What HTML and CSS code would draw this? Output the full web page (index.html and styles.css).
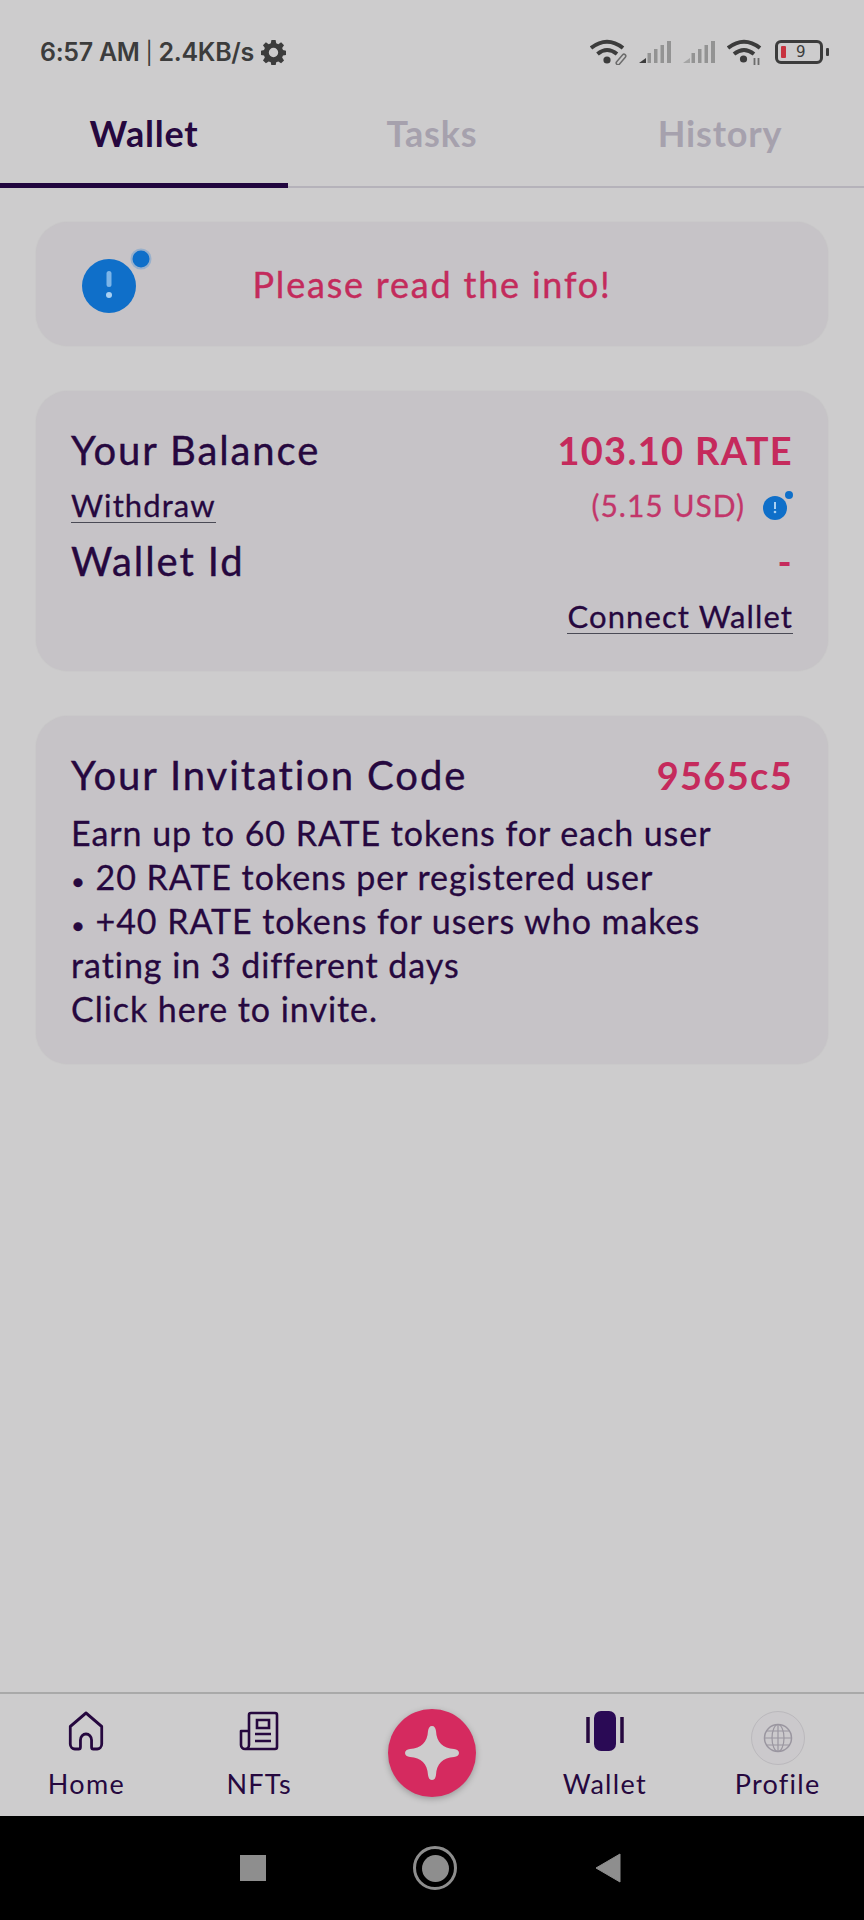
FILE: index.html
```html
<!DOCTYPE html>
<html lang="en">
<head>
  <meta charset="UTF-8">
  <meta name="viewport" content="width=device-width, initial-scale=1.0">
  <title>Wallet</title>
  <link rel="stylesheet" href="styles.css">
</head>
<body>
  <div class="status-bar">
    <div class="status-left">
      <span>6:57 AM <span class="sep">|</span> 2.4KB/s</span>
      <svg class="gear" viewBox="0 0 24 24"><path fill="#3c3c3c" fill-rule="evenodd" d="M10 0h4l.6 3.2 2 .8 2.7-1.8 2.8 2.8-1.8 2.7.8 2 3 .6v4l-3 .6-.8 2 1.8 2.7-2.8 2.8-2.7-1.8-2 .8-.6 3.2h-4l-.6-3.2-2-.8-2.7 1.8-2.8-2.8 1.8-2.7-.8-2-3-.6v-4l3-.6.8-2-1.8-2.7 2.8-2.8 2.7 1.8 2-.8zM12 7.500a4.500 4.500 0 1 0 0 9 4.500 4.500 0 0 0 0-9z"/></svg>
    </div>
    <div class="status-right">
      <svg class="wifi" viewBox="0 0 38 26">
        <path d="M1 9Q17-3.500 33 9M7.500 15Q17 7 27 15" fill="none" stroke="#3c3c3c" stroke-width="4"/>
        <circle cx="17" cy="21" r="3.600" fill="#3c3c3c"/>
        <path d="M28 24l6-7" fill="none" stroke="#6c6c6c" stroke-width="5" stroke-linecap="round"/>
        <path d="M28 24l6-7" fill="none" stroke="#cdcccd" stroke-width="2" stroke-linecap="round"/>
      </svg>
      <svg class="signal" viewBox="0 0 33 23">
        <path d="M0 22l7-5v5z" fill="#3c3c3c"/>
        <path d="M8.500 12h3.500v10H8.500zM15 8h3.500v14H15zM21.500 4H25v18h-3.500zM28 0h4v22h-4z" fill="#939393"/>
      </svg>
      <svg class="signal" viewBox="0 0 33 23">
        <path d="M0 22l7-5v5z" fill="#a5a5a5"/>
        <path d="M8.500 12h3.500v10H8.500zM15 8h3.500v14H15zM21.500 4H25v18h-3.500zM28 0h4v22h-4z" fill="#939393"/>
      </svg>
      <svg class="wifi wifi-two" viewBox="0 0 36 26">
        <path d="M1 9Q17-3.500 33 9M7 15Q17 7 27 15" fill="none" stroke="#3c3c3c" stroke-width="4"/>
        <circle cx="16.500" cy="20" r="3.600" fill="#3c3c3c"/>
        <path d="M27.500 19v7M31.500 19v7" stroke="#6c6c6c" stroke-width="1.800"/>
      </svg>
      <div class="battery">
        <div class="battery-body">
          <i class="battery-level"></i>
          <span class="battery-num">9</span>
        </div>
        <i class="battery-nub"></i>
      </div>
    </div>
  </div>

  <div class="tabs">
    <div class="tab active">Wallet</div>
    <div class="tab">Tasks</div>
    <div class="tab">History</div>
  </div>

  <div class="content">
    <div class="card info-card">
      <div class="info-icon big">
        <svg viewBox="0 0 72 72">
          <circle cx="27" cy="45" r="27" fill="#0f6fc9"/>
          <circle cx="59" cy="18" r="10.500" fill="#2f86d6" opacity="0.3"/>
          <circle cx="59" cy="18" r="8.500" fill="#0f6fc9"/>
          <rect x="24.500" y="30" width="5" height="16" rx="2.500" fill="#7db5e8"/>
          <circle cx="27" cy="54" r="3" fill="#a9d0f2"/>
        </svg>
      </div>
      <div class="info-text">Please read the info!</div>
    </div>

    <div class="card balance-card">
      <div class="row">
        <div class="label">Your Balance</div>
        <div class="value">103.10 RATE</div>
      </div>
      <div class="row">
        <a class="link">Withdraw</a>
        <div class="usd">
          (5.15 USD)
          <svg class="small-info" viewBox="0 0 32 32">
            <circle cx="13" cy="19" r="12" fill="#0f6fc9"/>
            <circle cx="27" cy="6" r="4" fill="#0f6fc9"/>
            <rect x="12" y="13" width="2" height="7" fill="#a9d0f2"/>
            <circle cx="13" cy="23" r="1.300" fill="#a9d0f2"/>
          </svg>
        </div>
      </div>
      <div class="row">
        <div class="label">Wallet Id</div>
        <div class="value">-</div>
      </div>
      <div class="row row-end">
        <a class="link">Connect Wallet</a>
      </div>
    </div>

    <div class="card invite-card">
      <div class="row invite-head">
        <div class="label">Your Invitation Code</div>
        <div class="value">9565c5</div>
      </div>
      <p class="invite-text">Earn up to 60 RATE tokens for each user<br>
      <span class="bullet">•</span> 20 RATE tokens per registered user<br>
      <span class="bullet">•</span> +40 RATE tokens for users who makes<br>
      rating in 3 different days<br>
      Click here to invite.</p>
    </div>
  </div>

  <div class="bottom-nav">
    <div class="nav-item">
      <svg class="nav-icon" viewBox="0 0 40 40">
        <path d="M3 15.500L20 2l17 13.500V33a5 5 0 0 1-5 5h-4a2 2 0 0 1-2-2v-7a6 6 0 0 0-12 0v7a2 2 0 0 1-2 2H8a5 5 0 0 1-5-5z" transform="translate(1.500 0) scale(.925 1)" fill="none" stroke="#26083f" stroke-width="3" stroke-linejoin="round"/>
      </svg>
      <span>Home</span>
    </div>
    <div class="nav-item">
      <svg class="nav-icon" viewBox="0 0 40 40">
        <path d="M10 20V4a2 2 0 0 1 2-2h24a2 2 0 0 1 2 2v32a2 2 0 0 1-2 2H6a4 4 0 0 1-4-4V20h8v14a4 4 0 0 1-4 4" fill="none" stroke="#26083f" stroke-width="2.600" stroke-linejoin="round"/>
        <path d="M18 9h12v8H18zM16 23h16M16 30h16" fill="none" stroke="#26083f" stroke-width="2.600"/>
      </svg>
      <span>NFTs</span>
    </div>
    <div class="nav-item nav-fab">
      <div class="fab">
        <svg viewBox="0 0 56 56"><path d="M28 1C30.500 1 31.500 3 32 6C32.500 17 39 23.500 50 24C53 24.500 55 25.500 55 28C55 30.500 53 31.500 50 32C39 32.500 32.500 39 32 50C31.500 53 30.500 55 28 55C25.500 55 24.500 53 24 50C23.500 39 17 32.500 6 32C3 31.500 1 30.500 1 28C1 25.500 3 24.500 6 24C17 23.500 23.500 17 24 6C24.500 3 25.500 1 28 1Z" fill="#cdcccd"/></svg>
      </div>
    </div>
    <div class="nav-item">
      <svg class="nav-icon" viewBox="0 0 40 40">
        <rect x="9" y="0" width="22" height="40" rx="7" fill="#2a0a55"/>
        <path d="M3 6v26M37 6v26" stroke="#26083f" stroke-width="3.500"/>
      </svg>
      <span>Wallet</span>
    </div>
    <div class="nav-item">
      <svg class="nav-icon profile-icon" viewBox="0 0 54 54">
        <circle cx="27" cy="27" r="26.500" fill="#cbc9cc" stroke="#bab8bc" stroke-width="1"/>
        <circle cx="27" cy="27" r="13.500" fill="none" stroke="#9a96a0" stroke-width="1.500"/>
        <ellipse cx="27" cy="27" rx="6" ry="13.500" fill="none" stroke="#9a96a0" stroke-width="1.200"/>
        <path d="M27 13.500v27M15 20h24M13.500 27h27M15 34h24" stroke="#9a96a0" stroke-width="1.200"/>
      </svg>
      <span>Profile</span>
    </div>
  </div>

  <div class="system-bar">
    <div class="sys-square"></div>
    <div class="sys-circle"><i></i></div>
    <svg class="sys-back" viewBox="0 0 26 30"><path d="M25 1v28L1 15z" fill="#8e8e8e" stroke="#8e8e8e" stroke-linejoin="round"/></svg>
  </div>
</body>
</html>
```

FILE: styles.css
```css
body {
  margin: 0;
  height: 1920px;
  display: flex;
  flex-direction: column;
  background: #cdcccd;
  font-family: "Lato", sans-serif;
  color: #26083f;
  overflow: hidden;
}

.status-bar {
  height: 92px;
  padding: 12px 35px 0 40px;
  box-sizing: border-box;
  display: flex;
  justify-content: space-between;
  align-items: center;
  color: #3c3c3c;
}

.status-left {
  display: flex;
  align-items: center;
  gap: 7px;
  font-family: "Inter", sans-serif;
  font-size: 25px;
  font-weight: 600;
  letter-spacing: -0.3px;
}

.sep {
  font-weight: 400;
  font-size: 22px;
}

.gear {
  width: 25px;
  height: 25px;
}

.status-right {
  display: flex;
  align-items: center;
  gap: 11px;
}

.wifi {
  width: 38px;
  height: 26px;
}

.wifi-two {
  width: 36px;
}

.signal {
  width: 33px;
  height: 23px;
}

.battery {
  display: flex;
  align-items: center;
  gap: 3px;
  margin-left: 1px;
}

.battery-body {
  width: 48px;
  height: 24px;
  border: 3px solid #3c3c3c;
  border-radius: 6px;
  box-sizing: border-box;
  display: flex;
  align-items: center;
  padding-left: 3px;
}

.battery-level {
  width: 5px;
  height: 12px;
  background: #c8333f;
  border-radius: 1px;
}

.battery-num {
  margin-left: 10px;
  font-family: "DejaVu Sans", sans-serif;
  font-size: 15px;
  font-weight: 400;
  color: #3c3c3c;
}

.battery-nub {
  width: 3px;
  height: 8px;
  background: #3c3c3c;
  border-radius: 1px;
}

.tabs {
  height: 96px;
  display: grid;
  grid-template-columns: repeat(3, 1fr);
  border-bottom: 2px solid #b5b2ba;
  box-sizing: border-box;
}

.tab {
  height: 96px;
  box-sizing: border-box;
  display: flex;
  align-items: center;
  justify-content: center;
  padding-bottom: 14px;
  font-size: 36px;
  font-weight: 700;
  letter-spacing: 0.8px;
  color: #a6a1ad;
}

.tab.active {
  color: #26083f;
  border-bottom: 5px solid #21063f;
  padding-bottom: 9px;
}

.content {
  flex: 1;
  padding: 34px 36px 0;
  display: flex;
  flex-direction: column;
  gap: 45px;
}

.card {
  background: #c6c3c7;
  border-radius: 32px;
  box-shadow: 0 0 2px rgba(0,0,0,0.06);
}

.info-card {
  height: 124px;
  display: grid;
  grid-template-columns: 1fr auto 1fr;
  align-items: center;
}

.info-icon {
  padding-left: 46px;
  height: 72px;
  padding-bottom: 14px;
}

.info-icon svg {
  width: 72px;
  height: 72px;
  display: block;
}

.info-text {
  font-size: 36px;
  letter-spacing: 1.800px;
  color: #c32b5c;
  -webkit-text-stroke: 0.4px;
}

.balance-card {
  padding: 31px 35px 27px;
}

.row {
  display: flex;
  justify-content: space-between;
  align-items: center;
  height: 55.500px;
}

.row-end {
  justify-content: flex-end;
}

.label {
  font-size: 40px;
  letter-spacing: 1.900px;
  -webkit-text-stroke: 0.4px;
}

.value {
  font-size: 38px;
  font-weight: 700;
  letter-spacing: 1.300px;
  color: #c52a5c;
}

.link {
  font-size: 31px;
  line-height: 34px;
  letter-spacing: 1.100px;
  border-bottom: 1px solid #4a4a55;
  -webkit-text-stroke: 0.3px;
}

.usd {
  display: flex;
  align-items: center;
  gap: 17px;
  font-size: 30px;
  letter-spacing: 1px;
  color: #c2366a;
  -webkit-text-stroke: 0.3px;
}

.small-info {
  width: 32px;
  height: 32px;
  margin-right: -1px;
}

.invite-card {
  padding: 33px 35px 33px;
}

.invite-head {
  height: 52px;
  margin-bottom: 10px;
}

.invite-text {
  margin: 0;
  font-size: 34px;
  line-height: 44px;
  letter-spacing: 0.950px;
  -webkit-text-stroke: 0.3px;
}

.bullet {
  font-size: 24px;
  line-height: 1;
}

.bottom-nav {
  height: 124px;
  border-top: 2px solid #a9a9a9;
  box-sizing: border-box;
  display: grid;
  grid-template-columns: repeat(5, 1fr);
}

.nav-item {
  display: flex;
  flex-direction: column;
  align-items: center;
  padding-top: 17px;
  font-size: 27px;
  letter-spacing: 1.300px;
}

.nav-icon {
  width: 40px;
  height: 40px;
  margin-bottom: 16px;
}

.profile-icon {
  width: 54px;
  height: 54px;
  margin-bottom: 2px;
}

.nav-fab {
  padding-top: 15px;
}

.fab {
  width: 88px;
  height: 88px;
  border-radius: 50%;
  background: #d52a5f;
  box-shadow: 0 2px 6px rgba(0,0,0,0.25);
  display: flex;
  align-items: center;
  justify-content: center;
}

.fab svg {
  width: 56px;
  height: 56px;
}

.system-bar {
  height: 104px;
  background: #000;
  display: flex;
  align-items: center;
  padding: 0 0 0 240px;
  box-sizing: border-box;
}

.sys-square {
  width: 26px;
  height: 26px;
  background: #8e8e8e;
}

.sys-circle {
  width: 38px;
  height: 38px;
  border: 3px solid #8e8e8e;
  border-radius: 50%;
  margin-left: 147px;
  display: flex;
  align-items: center;
  justify-content: center;
}

.sys-circle i {
  width: 27px;
  height: 27px;
  background: #8e8e8e;
  border-radius: 50%;
}

.sys-back {
  width: 26px;
  height: 30px;
  margin-left: 138px;
}
```
